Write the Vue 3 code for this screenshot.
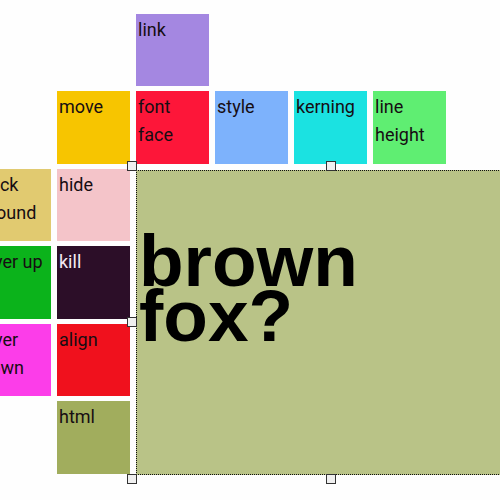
<script setup>
const tools = [
  { id: 'link', label: 'link' },
  { id: 'move', label: 'move' },
  { id: 'font', label: 'font\nface' },
  { id: 'style', label: 'style' },
  { id: 'kerning', label: 'kerning' },
  { id: 'line', label: 'line\nheight' },
  { id: 'background', label: 'back\nground' },
  { id: 'hide', label: 'hide' },
  { id: 'up', label: 'layer up' },
  { id: 'kill', label: 'kill' },
  { id: 'down', label: 'layer\ndown' },
  { id: 'align', label: 'align' },
  { id: 'html', label: 'html' }
]
const handles = ['top-left', 'top', 'left', 'bottom-left', 'bottom']
</script>

<template>
  <main class="editor">
    <div class="board">
      <button v-for="tool in tools" :key="tool.id" type="button" class="tile" :class="tool.id">{{ tool.label }}</button>
      <section class="layer">
        <p class="text">brown<br>fox?</p>
        <span v-for="handle in handles" :key="handle" class="handle" :class="'at-' + handle"></span>
      </section>
    </div>
  </main>
</template>

<style>
body {
  background: #fefefe;
}
</style>

<style scoped>
.editor {
  overflow: hidden;
  padding: 14px 0 24px;
}
.board {
  display: grid;
  grid-template-columns: repeat(7, 73px);
  grid-template-rows: repeat(3, 72px 73px);
  gap: 5px 6px;
  margin-left: -22px;
}
.tile {
  display: flex;
  align-items: flex-start;
  margin: 0;
  padding: 2px;
  border: 0;
  border-radius: 0;
  color: #160d12;
  font: 18px/28px Roboto, sans-serif;
  text-align: left;
  white-space: pre;
  cursor: pointer;
}
.link { grid-area: 1 / 3; background: #a487e1; }
.move { grid-area: 2 / 2; background: #f7c500; }
.font { grid-area: 2 / 3; background: #fd1639; }
.style { grid-area: 2 / 4; background: #7db2fc; }
.kerning { grid-area: 2 / 5; background: #1be2e1; }
.line { grid-area: 2 / 6; background: #5fee72; }
.background { grid-area: 3 / 1; background: #e1ca70; }
.hide { grid-area: 3 / 2; background: #f4c4c9; }
.up { grid-area: 4 / 1; background: #0bb31b; }
.kill { grid-area: 4 / 2; background: #2c0e28; color: #f4eaf2; }
.down { grid-area: 5 / 1; background: #fc3de9; }
.align { grid-area: 5 / 2; background: #f0111d; }
.html { grid-area: 6 / 2; background: #a1ad5d; }
.layer {
  grid-area: 3 / 3 / 7 / 8;
  position: relative;
  margin: 1px 0 -1px;
  padding: 62px 2px 0;
  border: 1px dotted #111;
  background: #b9c387;
}
.text {
  margin: 0;
  color: #000;
  font: bold 73px/55px "Liberation Sans", Arial, sans-serif;
}
.handle {
  position: absolute;
  box-sizing: border-box;
  width: 10px;
  height: 10px;
  border: 1px solid #333;
  background: #f0f0f0;
}
.at-top-left { top: -10px; left: -10px; }
.at-top { top: -10px; left: calc(50% - 5px); }
.at-left { top: calc(50% - 6px); left: -10px; }
.at-bottom-left { bottom: -10px; left: -10px; }
.at-bottom { bottom: -10px; left: calc(50% - 5px); }
</style>
